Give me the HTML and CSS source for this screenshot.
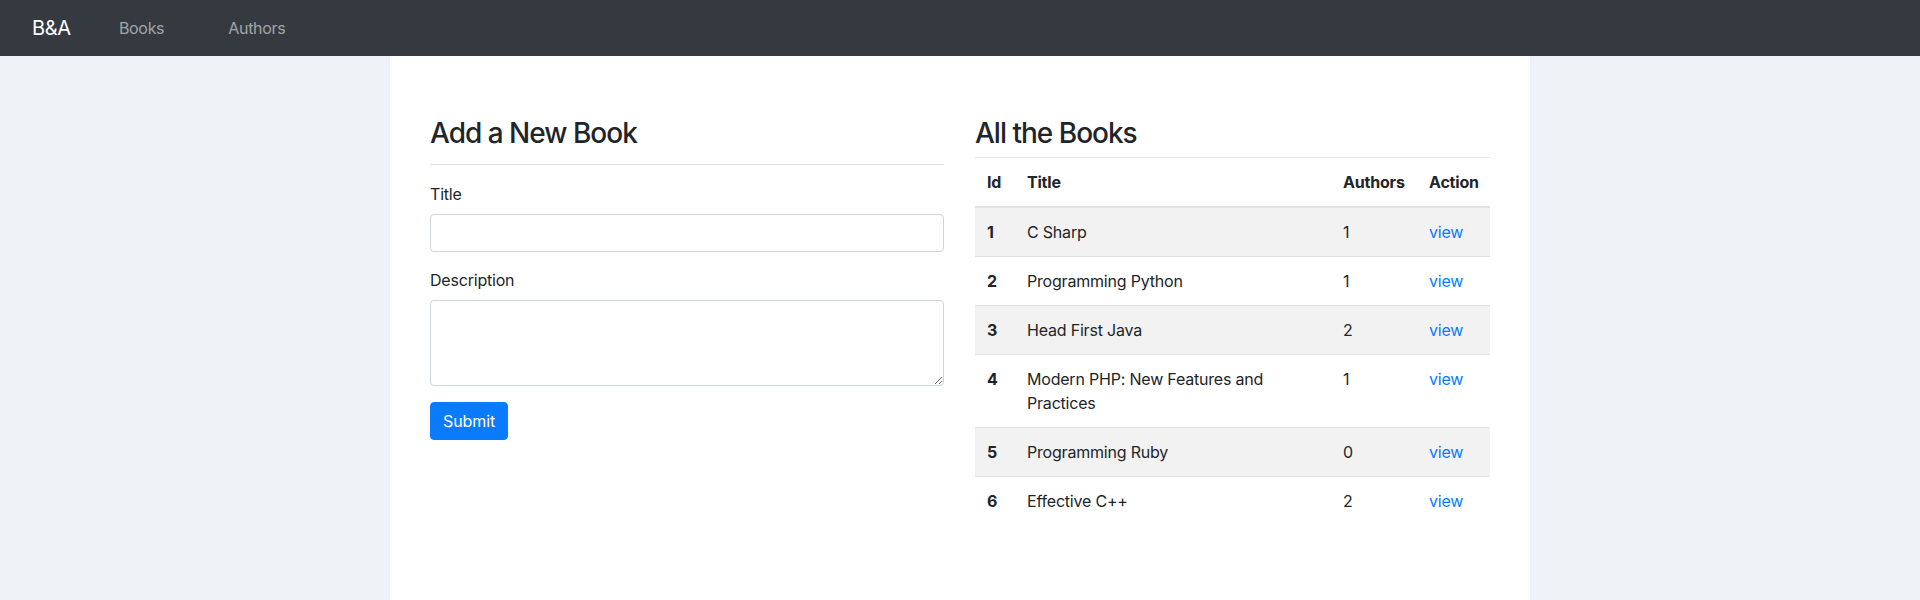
FILE: index.html
```html
<!DOCTYPE html>
<html lang="en">
<head>
<meta charset="utf-8">
<title>B&amp;A</title>
<link rel="stylesheet" href="styles.css">
</head>
<body>
<nav class="navbar">
  <a class="brand" href="#">B&amp;A</a>
  <a class="nav-link" href="#">Books</a>
  <a class="nav-link" href="#">Authors</a>
</nav>
<main class="container">
  <section class="col">
    <h3 class="heading">Add a New Book</h3>
    <hr class="divider">
    <form class="form">
      <div class="form-group">
        <label class="label" for="title">Title</label>
        <input class="control" id="title" type="text">
      </div>
      <div class="form-group">
        <label class="label" for="desc">Description</label>
        <textarea class="control textarea" id="desc" rows="3"></textarea>
      </div>
      <button class="btn" type="button">Submit</button>
    </form>
  </section>
  <section class="col">
    <h3 class="heading">All the Books</h3>
    <table class="table">
      <colgroup>
        <col class="c-id"><col class="c-title"><col class="c-authors"><col class="c-action">
      </colgroup>
      <thead>
        <tr><th>Id</th><th>Title</th><th>Authors</th><th>Action</th></tr>
      </thead>
      <tbody>
        <tr><th>1</th><td>C Sharp</td><td>1</td><td><a href="#">view</a></td></tr>
        <tr><th>2</th><td>Programming Python</td><td>1</td><td><a href="#">view</a></td></tr>
        <tr><th>3</th><td>Head First Java</td><td>2</td><td><a href="#">view</a></td></tr>
        <tr><th>4</th><td>Modern PHP: New Features and Practices</td><td>1</td><td><a href="#">view</a></td></tr>
        <tr><th>5</th><td>Programming Ruby</td><td>0</td><td><a href="#">view</a></td></tr>
        <tr><th>6</th><td>Effective C++</td><td>2</td><td><a href="#">view</a></td></tr>
      </tbody>
    </table>
  </section>
</main>
</body>
</html>
```
FILE: styles.css
```css
* { box-sizing: border-box; }
html, body { height: 100%; }
body {
  margin: 0;
  background: #eff2f7;
  color: #212529;
  font-family: Inter, "Noto Sans", sans-serif;
  font-size: 16px;
  line-height: 24px;
  display: flex;
  flex-direction: column;
}
.navbar {
  height: 56px;
  background: #343a40;
  display: flex;
  align-items: center;
  padding-left: 32px;
  flex-shrink: 0;
}
.brand {
  color: #fff;
  font-size: 20px;
  text-decoration: none;
  margin-right: 16px;
  letter-spacing: -0.3px;
}
.nav-link {
  color: rgba(255,255,255,.55);
  text-decoration: none;
  padding: 0 32px;
  letter-spacing: -0.3px;
}
.container {
  width: 1140px;
  margin: 0 auto;
  flex: 1;
  background: #fff;
  padding: 60px 40px 0;
  display: grid;
  grid-template-columns: 514px 515px;
  column-gap: 31px;
  align-content: start;
  letter-spacing: -0.2px;
}
.heading {
  margin: 0 0 7px;
  font-size: 28px;
  font-weight: 500;
  line-height: 34px;
  letter-spacing: -1px;
}
.divider {
  margin: 14px 0 17px;
  border: 0;
  border-top: 1px solid #dcdee2;
}
.form-group { margin-bottom: 16px; }
.label { display: block; margin-bottom: 8px; }
.control {
  display: block;
  width: 100%;
  height: 38px;
  border: 1px solid #ced4da;
  border-radius: 4px;
  padding: 6px 12px;
  font: inherit;
}
.textarea { height: 86px; resize: vertical; }
.btn {
  background: #0a7bfd;
  color: #fff;
  border: 1px solid #0a7bfd;
  border-radius: 4px;
  height: 38px;
  padding: 0 12px;
  font: inherit;
  letter-spacing: -0.1px;
}
.table {
  width: 100%;
  border-collapse: collapse;
  table-layout: fixed;
}
.c-id { width: 40px; }
.c-title { width: 316px; }
.c-authors { width: 86px; }
.c-action { width: 73px; }
.table th, .table td {
  padding: 12px;
  text-align: left;
  vertical-align: top;
  border-top: 1px solid #dee2e6;
}
.table th { font-weight: 700; }
.table thead th { border-bottom: 2px solid #dee2e6; }
.table tbody tr:nth-child(odd) { background: #f2f2f2; }
.table a { color: #0a7bfd; text-decoration: none; }
```
